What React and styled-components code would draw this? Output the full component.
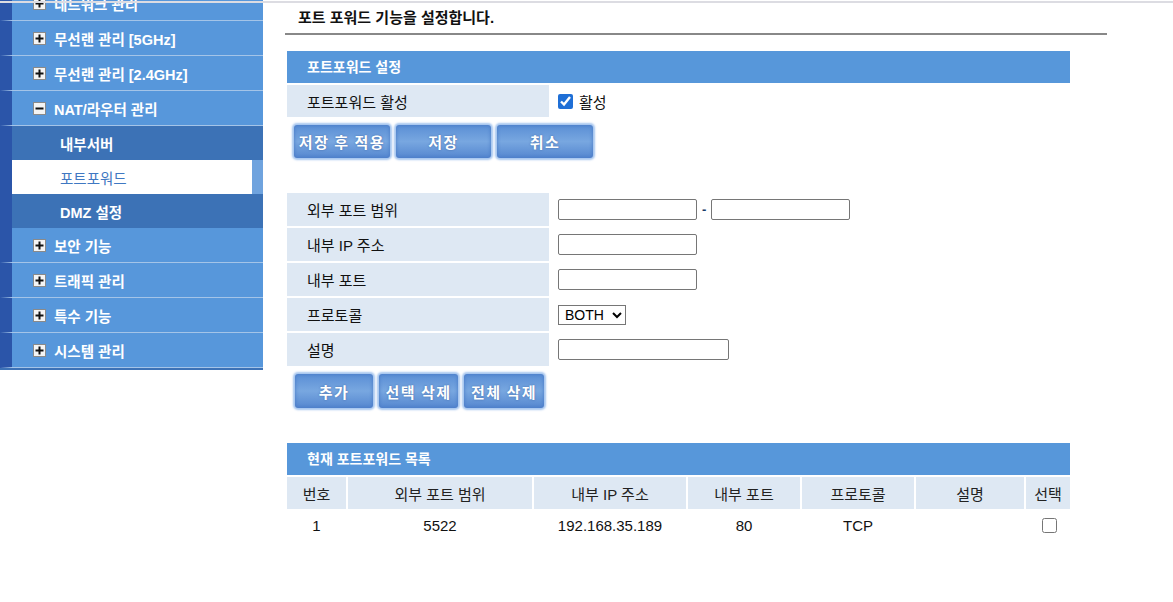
import React from "react";
import styled, { createGlobalStyle } from "styled-components";

const Global = createGlobalStyle`
  html, body {
    margin: 0;
    padding: 0;
    background: #fff;
    font-family: "Liberation Sans", "Noto Sans CJK KR", sans-serif;
    color: #111;
  }
`;

const TopLine = styled.div`
  position: fixed;
  top: 1px;
  left: 0;
  right: 0;
  height: 2px;
  background: #dcdce2;
  z-index: 5;
`;

const Page = styled.div`
  display: flex;
  align-items: flex-start;
`;

const Sidebar = styled.nav`
  width: 263px;
  margin-top: -14px;
  background: #5797db;
  border-bottom: 2px solid #3d72b6;
  flex-shrink: 0;
`;

const MenuItem = styled.div`
  display: flex;
  align-items: center;
  gap: 8px;
  height: 34px;
  padding-left: 21px;
  border-left: 12px solid #2b55a9;
  border-bottom: 1px solid #a4c4e8;
  color: #fff;
  font-size: 14.5px;
  font-weight: bold;
`;

const SubItem = styled.div`
  display: flex;
  align-items: center;
  height: 34px;
  padding-left: 48px;
  border-left: 12px solid #2b55a9;
  border-right: ${(p) => (p.$active ? "11px solid #6fa3de" : "0")};
  background: ${(p) => (p.$active ? "#fff" : "#3c72b6")};
  color: ${(p) => (p.$active ? "#3f78c2" : "#fff")};
  font-size: 14.5px;
  font-weight: ${(p) => (p.$active ? "normal" : "bold")};
`;

const Toggle = ({ open }) => (
  <svg width="13" height="13" viewBox="0 0 13 13">
    <rect x="0.5" y="0.5" width="12" height="12" fill="#f4f4f4" stroke="#8a8a8a" />
    <rect x="2.5" y="5.5" width="8" height="2" fill="#111" />
    {!open && <rect x="5.5" y="2.5" width="2" height="8" fill="#111" />}
  </svg>
);

const Main = styled.main`
  margin-left: 22px;
  width: 822px;
`;

const Title = styled.div`
  height: 30px;
  padding-top: 3px;
  padding-left: 13px;
  line-height: 30px;
  font-size: 15px;
  font-weight: bold;
  border-bottom: 2px solid #888;
`;

const Section = styled.section`
  width: 783px;
  margin-left: 2px;
  margin-top: ${(p) => p.$top || 0}px;
`;

const BarHead = styled.div`
  height: 32px;
  line-height: 32px;
  padding-left: 20px;
  background: #5797da;
  color: #fff;
  font-size: 14px;
  font-weight: bold;
`;

const FormTable = styled.div`
  display: flex;
  flex-direction: column;
  gap: 2px;
  margin-top: ${(p) => p.$top || 0}px;
`;

const FormRow = styled.div`
  display: flex;
  height: ${(p) => p.$h || 33}px;
`;

const Label = styled.div`
  width: 242px;
  padding-left: 20px;
  display: flex;
  align-items: center;
  background: #dee8f3;
  font-size: 15px;
  color: #111;
`;

const Value = styled.div`
  display: flex;
  align-items: center;
  padding-left: 9px;
  font-size: 15px;
`;

const Check = styled.input.attrs({ type: "checkbox" })`
  width: 15px;
  height: 15px;
  margin: 0 6px 0 0;
  accent-color: #1f6fd6;
`;

const TextBox = styled.input.attrs({ type: "text" })`
  box-sizing: border-box;
  width: ${(p) => p.$w || 139}px;
  height: 21px;
  border: 1px solid #767676;
  border-radius: 2px;
  margin: 0;
  padding: 1px 2px;
  font-size: 13px;
`;

const Dash = styled.span`
  margin: 0 5px 0 5px;
  font-weight: bold;
  font-size: 13px;
  color: #1b3a66;
`;

const Select = styled.select`
  height: 20px;
  width: 68px;
  font-family: "Liberation Sans", sans-serif;
  font-size: 14px;
  border: 1px solid #767676;
  border-radius: 0;
  background: #fff;
  color: #000;
  padding: 0 0 0 2px;
`;

const ButtonRow = styled.div`
  display: flex;
  gap: ${(p) => p.$gap || 6}px;
  padding-left: ${(p) => p.$left || 7}px;
  margin-top: ${(p) => p.$top || 0}px;
`;

const Btn = styled.button`
  width: ${(p) => p.$w}px;
  height: ${(p) => p.$h || 33}px;
  border: none;
  border-radius: 3px;
  padding: 0;
  background: linear-gradient(#5a8ed5, #78a7e0 50%, #5587d0);
  box-shadow: 0 0 2px 2px rgba(150, 188, 236, 0.85),
    inset 0 0 3px 1px rgba(70, 118, 196, 0.6);
  color: #fff;
  font-family: "Noto Sans CJK KR", sans-serif;
  font-size: 15px;
  font-weight: bold;
  letter-spacing: 1.5px;
  text-shadow: 0 0 2px rgba(40, 70, 130, 0.6);
  cursor: pointer;
`;

const Grid = styled.div`
  display: grid;
  grid-template-columns: 59px 184px 152px 112px 112px 108px 44px;
  column-gap: 2px;
  margin-top: 2px;
`;

const HeadCell = styled.div`
  height: 32px;
  display: flex;
  align-items: center;
  justify-content: center;
  background: #dee8f3;
  font-size: 15px;
  color: #222;
`;

const Cell = styled.div`
  height: 32px;
  display: flex;
  align-items: center;
  justify-content: center;
  font-size: 15px;
  color: #111;
`;

const RowCheck = styled.input.attrs({ type: "checkbox" })`
  width: 15px;
  height: 15px;
  margin: 0 0 0 2px;
`;

const menuTop = [
  { label: "네트워크 관리" },
  { label: "무선랜 관리 [5GHz]" },
  { label: "무선랜 관리 [2.4GHz]" },
  { label: "NAT/라우터 관리", open: true },
];
const menuBottom = ["보안 기능", "트래픽 관리", "특수 기능", "시스템 관리"];

const columns = ["번호", "외부 포트 범위", "내부 IP 주소", "내부 포트", "프로토콜", "설명", "선택"];
const rows = [{ no: "1", ext: "5522", ip: "192.168.35.189", port: "80", proto: "TCP", desc: "" }];

export default function App() {
  return (
    <>
      <Global />
      <TopLine />
      <Page>
        <Sidebar>
          {menuTop.map((m) => (
            <MenuItem key={m.label}>
              <Toggle open={m.open} />
              {m.label}
            </MenuItem>
          ))}
          <SubItem>내부서버</SubItem>
          <SubItem $active>포트포워드</SubItem>
          <SubItem>DMZ 설정</SubItem>
          {menuBottom.map((m) => (
            <MenuItem key={m}>
              <Toggle />
              {m}
            </MenuItem>
          ))}
        </Sidebar>

        <Main>
          <Title>포트 포워드 기능을 설정합니다.</Title>

          <Section $top={16}>
            <BarHead>포트포워드 설정</BarHead>
            <FormTable $top={2}>
              <FormRow $h={32}>
                <Label>포트포워드 활성</Label>
                <Value>
                  <Check defaultChecked />
                  활성
                </Value>
              </FormRow>
            </FormTable>
            <ButtonRow $top={8}>
              <Btn $w={96}>저장 후 적용</Btn>
              <Btn $w={95}>저장</Btn>
              <Btn $w={96}>취소</Btn>
            </ButtonRow>
          </Section>

          <Section $top={35}>
            <FormTable>
              <FormRow>
                <Label>외부 포트 범위</Label>
                <Value>
                  <TextBox />
                  <Dash>-</Dash>
                  <TextBox />
                </Value>
              </FormRow>
              <FormRow>
                <Label>내부 IP 주소</Label>
                <Value>
                  <TextBox />
                </Value>
              </FormRow>
              <FormRow>
                <Label>내부 포트</Label>
                <Value>
                  <TextBox />
                </Value>
              </FormRow>
              <FormRow>
                <Label>프로토콜</Label>
                <Value>
                  <Select defaultValue="BOTH">
                    <option>BOTH</option>
                    <option>TCP</option>
                    <option>UDP</option>
                  </Select>
                </Value>
              </FormRow>
              <FormRow>
                <Label>설명</Label>
                <Value>
                  <TextBox $w={171} />
                </Value>
              </FormRow>
            </FormTable>
            <ButtonRow $top={8} $left={8} $gap={6}>
              <Btn $w={78} $h={34}>추가</Btn>
              <Btn $w={79} $h={34}>선택 삭제</Btn>
              <Btn $w={80} $h={34}>전체 삭제</Btn>
            </ButtonRow>
          </Section>

          <Section $top={35}>
            <BarHead>현재 포트포워드 목록</BarHead>
            <Grid>
              {columns.map((c) => (
                <HeadCell key={c}>{c}</HeadCell>
              ))}
              {rows.map((r) => (
                <React.Fragment key={r.no}>
                  <Cell>{r.no}</Cell>
                  <Cell>{r.ext}</Cell>
                  <Cell>{r.ip}</Cell>
                  <Cell>{r.port}</Cell>
                  <Cell>{r.proto}</Cell>
                  <Cell>{r.desc}</Cell>
                  <Cell>
                    <RowCheck />
                  </Cell>
                </React.Fragment>
              ))}
            </Grid>
          </Section>
        </Main>
      </Page>
    </>
  );
}
